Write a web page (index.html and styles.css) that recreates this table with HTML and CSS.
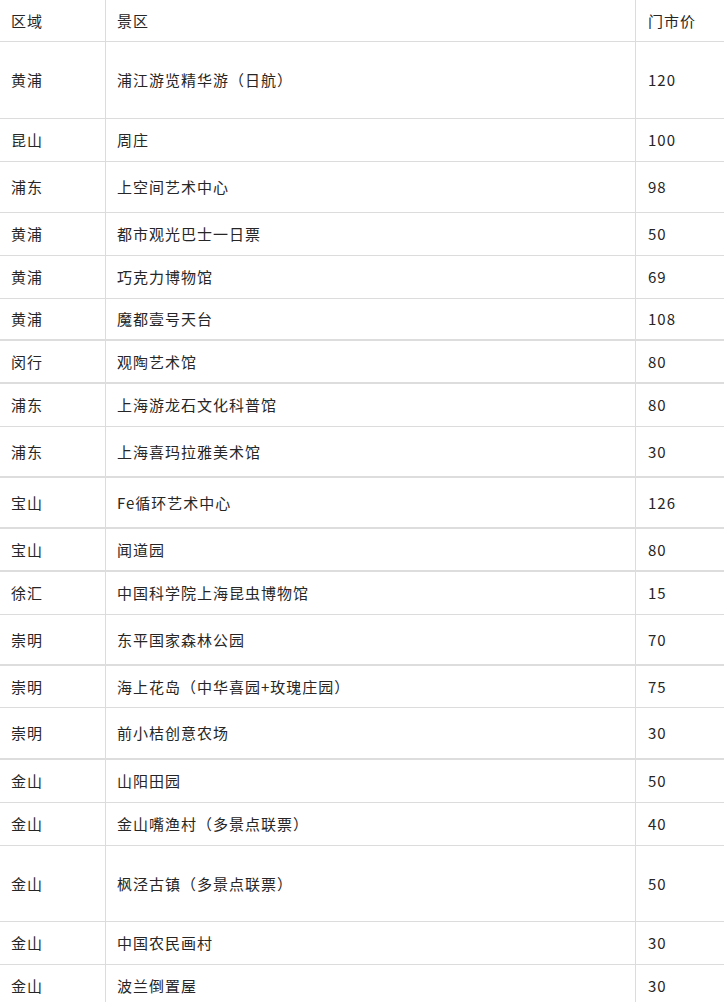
FILE: index.html
```html
<!DOCTYPE html>
<html lang="zh-CN">
<head>
<meta charset="utf-8">
<title>景区门市价</title>
<link rel="stylesheet" href="styles.css">
</head>
<body>
<div class="table">
  <div class="row head"><div class="c1">区域</div><div class="c2">景区</div><div class="c3">门市价</div></div>
  <div class="row h77"><div class="c1">黄浦</div><div class="c2">浦江游览精华游（日航）</div><div class="c3">120</div></div>
  <div class="row h43"><div class="c1">昆山</div><div class="c2">周庄</div><div class="c3">100</div></div>
  <div class="row h51"><div class="c1">浦东</div><div class="c2">上空间艺术中心</div><div class="c3">98</div></div>
  <div class="row h43"><div class="c1">黄浦</div><div class="c2">都市观光巴士一日票</div><div class="c3">50</div></div>
  <div class="row h43"><div class="c1">黄浦</div><div class="c2">巧克力博物馆</div><div class="c3">69</div></div>
  <div class="row h41"><div class="c1">黄浦</div><div class="c2">魔都壹号天台</div><div class="c3">108</div></div>
  <div class="row h43 thick"><div class="c1">闵行</div><div class="c2">观陶艺术馆</div><div class="c3">80</div></div>
  <div class="row h44 thick"><div class="c1">浦东</div><div class="c2">上海游龙石文化科普馆</div><div class="c3">80</div></div>
  <div class="row h50"><div class="c1">浦东</div><div class="c2">上海喜玛拉雅美术馆</div><div class="c3">30</div></div>
  <div class="row h51 thick"><div class="c1">宝山</div><div class="c2">Fe循环艺术中心</div><div class="c3">126</div></div>
  <div class="row h43 thick"><div class="c1">宝山</div><div class="c2">闻道园</div><div class="c3">80</div></div>
  <div class="row h44 thick"><div class="c1">徐汇</div><div class="c2">中国科学院上海昆虫博物馆</div><div class="c3">15</div></div>
  <div class="row h50"><div class="c1">崇明</div><div class="c2">东平国家森林公园</div><div class="c3">70</div></div>
  <div class="row h43 thick"><div class="c1">崇明</div><div class="c2">海上花岛（中华喜园+玫瑰庄园）</div><div class="c3">75</div></div>
  <div class="row h51"><div class="c1">崇明</div><div class="c2">前小桔创意农场</div><div class="c3">30</div></div>
  <div class="row h44 thick"><div class="c1">金山</div><div class="c2">山阳田园</div><div class="c3">50</div></div>
  <div class="row h43"><div class="c1">金山</div><div class="c2">金山嘴渔村（多景点联票）</div><div class="c3">40</div></div>
  <div class="row h76"><div class="c1">金山</div><div class="c2">枫泾古镇（多景点联票）</div><div class="c3">50</div></div>
  <div class="row h43"><div class="c1">金山</div><div class="c2">中国农民画村</div><div class="c3">30</div></div>
  <div class="row h43"><div class="c1">金山</div><div class="c2">波兰倒置屋</div><div class="c3">30</div></div>
</div>
</body>
</html>
```

FILE: styles.css
```css
html, body {
  margin: 0;
  padding: 0;
  background: #ffffff;
}

body {
  font-family: "Noto Sans CJK SC", "Noto Sans", sans-serif;
  font-size: 15px;
  letter-spacing: 1px;
  color: #262626;
  width: 724px;
  overflow: hidden;
}

.table {
  display: flex;
  flex-direction: column;
}

.row {
  display: grid;
  grid-template-columns: 105px 530px 89px;
  box-sizing: border-box;
  border-top: 1px solid #dcdcdc;
}

.row > div {
  display: flex;
  align-items: center;
  box-sizing: border-box;
  line-height: 20px;
}

.row.head {
  height: 41px;
  border-top: none;
}

.row.thick {
  border-top: 2px solid #dddddd;
}

.c1 {
  padding-left: 11px;
}

.c2 {
  padding-left: 11px;
  border-left: 1px solid #dcdcdc;
}

.c3 {
  padding-left: 12px;
  border-left: 1px solid #dcdcdc;
}

.h41 { height: 41px; }
.h43 { height: 43px; }
.h44 { height: 44px; }
.h50 { height: 50px; }
.h51 { height: 51px; }
.h76 { height: 76px; }
.h77 { height: 77px; }
```
